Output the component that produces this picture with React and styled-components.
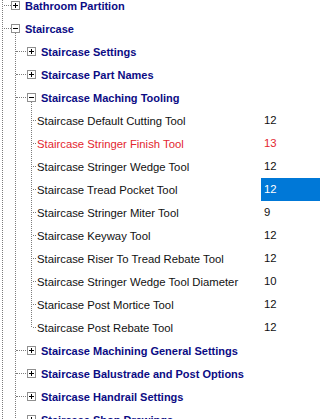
import React from "react";
import styled, { createGlobalStyle } from "styled-components";

const GlobalStyle = createGlobalStyle`
  html, body {
    margin: 0;
    padding: 0;
    background: #ffffff;
    overflow: hidden;
  }
  body {
    font-family: "Liberation Sans", Arial, sans-serif;
  }
`;

const dots = (dir) =>
  `repeating-linear-gradient(${dir}, #7d7d7d 0 1px, transparent 1px 2px)`;

const Tree = styled.div`
  width: 320px;
  height: 419px;
  overflow: hidden;
  background-image: ${dots("to bottom")};
  background-repeat: no-repeat;
  background-position: 2px 0;
  background-size: 1px 100%;
`;

const Inner = styled.div`
  margin-top: -6px;
`;

const Group = styled.div`
  background-image: ${dots("to bottom")};
  background-repeat: no-repeat;
  background-position: ${(p) => p.$lineX}px 16px;
  background-size: 1px
    ${(p) => (p.$toEnd ? "calc(100% - 16px)" : "calc(100% - 16px - 11px)")};
`;

const Row = styled.div`
  height: 23px;
  display: flex;
  align-items: center;
  padding-left: ${(p) => p.$lineX + 1}px;
  white-space: nowrap;
`;

const Connector = styled.span`
  flex: none;
  width: ${(p) => p.$w}px;
  height: 1px;
  background-image: ${dots("to right")};
  background-position: 1px 0;
`;

const Box = styled.svg`
  flex: none;
  width: 9px;
  height: 9px;
  display: block;
`;

const Label = styled.span`
  flex: 1;
  margin-left: ${(p) => (p.$bold ? 5 : 1)}px;
  font-size: ${(p) => (p.$bold ? 11 : 11.3)}px;
  font-weight: ${(p) => (p.$bold ? 700 : 400)};
  color: ${(p) => (p.$bold ? "#0b0b84" : p.$red ? "#e3262f" : "#111111")};
`;

const Value = styled.span`
  flex: none;
  width: 56px;
  height: 23px;
  line-height: 23px;
  padding-left: 3px;
  font-size: 11.3px;
  color: ${(p) => (p.$selected ? "#ffffff" : p.$red ? "#e3262f" : "#111111")};
  background: ${(p) => (p.$selected ? "#0078d7" : "transparent")};
`;

const Toggle = ({ open }) => (
  <Box viewBox="0 0 9 9">
    <rect x="0.5" y="0.5" width="8" height="8" fill="#fff" stroke="#8f8f8f" />
    <path d="M2 4.5h5" stroke="#000" />
    {!open && <path d="M4.5 2v5" stroke="#000" />}
  </Box>
);

const tools = [
  ["Staircase Default Cutting Tool", "12"],
  ["Staircase Stringer Finish Tool", "13", "red"],
  ["Staircase Stringer Wedge Tool", "12"],
  ["Staircase Tread Pocket Tool", "12", "selected"],
  ["Staircase Stringer Miter Tool", "9"],
  ["Staircase Keyway Tool", "12"],
  ["Staircase Riser To Tread Rebate Tool", "12"],
  ["Staircase Stringer Wedge Tool Diameter", "10"],
  ["Staricase Post Mortice Tool", "12"],
  ["Staircase Post Rebate Tool", "12"],
];

const NodeRow = ({ lineX, conn, label, open }) => (
  <Row $lineX={lineX}>
    <Connector $w={conn} />
    <Toggle open={open} />
    <Label $bold>{label}</Label>
  </Row>
);

const LeafRow = ({ label, value, mark }) => (
  <Row $lineX={31}>
    <Connector $w={4} />
    <Label $red={mark === "red"}>{label}</Label>
    <Value $red={mark === "red"} $selected={mark === "selected"}>
      {value}
    </Value>
  </Row>
);

export default function App() {
  return (
    <>
      <GlobalStyle />
      <Tree>
        <Inner>
          <NodeRow lineX={2} conn={8} label="Bathroom Partition" />
          <Group $lineX={15} $toEnd>
            <NodeRow lineX={2} conn={8} label="Staircase" open />
            <NodeRow lineX={15} conn={11} label="Staircase Settings" />
            <NodeRow lineX={15} conn={11} label="Staircase Part Names" />
            <Group $lineX={31}>
              <NodeRow lineX={15} conn={11} label="Staircase Maching Tooling" open />
              {tools.map(([label, value, mark]) => (
                <LeafRow key={label} label={label} value={value} mark={mark} />
              ))}
            </Group>
            <NodeRow lineX={15} conn={11} label="Staircase Machining General Settings" />
            <NodeRow lineX={15} conn={11} label="Staircase Balustrade and Post Options" />
            <NodeRow lineX={15} conn={11} label="Staircase Handrail Settings" />
            <NodeRow lineX={15} conn={11} label="Staircase Shop Drawings" />
          </Group>
        </Inner>
      </Tree>
    </>
  );
}
